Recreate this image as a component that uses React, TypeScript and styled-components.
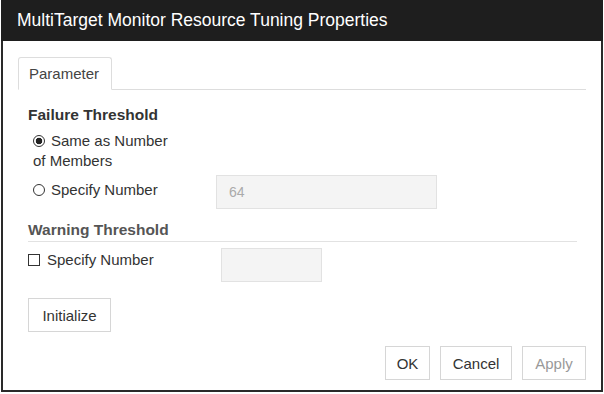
import { createGlobalStyle } from "styled-components"
import styled from "styled-components"

const GlobalStyle = createGlobalStyle`
    html, body {
        margin: 0;
        padding: 0;
        background: #ffffff;
    }
    body {
        font-family: "Liberation Sans", Arial, sans-serif;
        color: #333333;
    }
`

export default function App() {
    return (
        <>
            <GlobalStyle />
            <Window>
                <TitleBar>MultiTarget Monitor Resource Tuning Properties</TitleBar>
                <Body>
                    <TabBar>
                        <Tab>Parameter</Tab>
                    </TabBar>
                    <Panel>
                        <SectionTitle>Failure Threshold</SectionTitle>
                        <Options>
                            <WrapLabel>
                                <Radio $checked />
                                Same as Number of Members
                            </WrapLabel>
                            <Row $top={4}>
                                <OptionLabel $width={183} $offset={5}>
                                    <Radio />
                                    Specify Number
                                </OptionLabel>
                                <TextField $width={221} $disabled>64</TextField>
                            </Row>
                        </Options>

                        <SectionTitle $muted $ruled>Warning Threshold</SectionTitle>
                        <Row $top={6}>
                            <OptionLabel $width={193} $offset={2}>
                                <Checkbox />
                                Specify Number
                            </OptionLabel>
                            <TextField $width={101} $disabled />
                        </Row>

                        <ButtonRow $top={16}>
                            <Button $width={83}>Initialize</Button>
                        </ButtonRow>
                    </Panel>
                    <Footer>
                        <Button $width={45}>OK</Button>
                        <Button $width={72}>Cancel</Button>
                        <Button $width={64} $disabled>Apply</Button>
                    </Footer>
                </Body>
            </Window>
        </>
    )
}

const Window = styled.div`
    box-sizing: border-box;
    margin-left: 1px;
    width: 602px;
    height: 392px;
    border: 2px solid #2a2a2a;
    border-top: none;
    background: #ffffff;
    display: flex;
    flex-direction: column;
`

const TitleBar = styled.div`
    height: 41px;
    margin: 0 -2px;
    padding-left: 16px;
    background: #1e1e1e;
    color: #ffffff;
    font-size: 17.5px;
    line-height: 41px;
    white-space: nowrap;
`

const Body = styled.div`
    flex: 1;
    padding: 16px 15px 0 15px;
    display: flex;
    flex-direction: column;
`

const TabBar = styled.div`
    display: flex;
    border-bottom: 1px solid #dddddd;
`

const Tab = styled.div`
    box-sizing: border-box;
    width: 94px;
    height: 33px;
    margin-bottom: -1px;
    padding-left: 10px;
    border: 1px solid #dddddd;
    border-bottom-color: #ffffff;
    border-radius: 3px 3px 0 0;
    background: #ffffff;
    color: #444444;
    font-size: 15px;
    line-height: 31px;
`

const Panel = styled.div`
    padding: 15px 0 0 10px;
    display: flex;
    flex-direction: column;
`

const SectionTitle = styled.div<{ $muted?: boolean; $ruled?: boolean }>`
    font-size: 15.5px;
    font-weight: 700;
    line-height: 20px;
    color: ${(p) => (p.$muted ? "#555555" : "#333333")};
    ${(p) =>
        p.$ruled &&
        `
        margin-top: 11px;
        margin-right: 9px;
        padding-bottom: 1px;
        border-bottom: 1px solid #e2e2e2;
    `}
`

const Options = styled.div`
    padding-left: 5px;
    margin-top: 6px;
    display: flex;
    flex-direction: column;
`

const WrapLabel = styled.div`
    width: 150px;
    font-size: 15px;
    line-height: 20px;
`

const Row = styled.div<{ $top: number }>`
    display: flex;
    align-items: flex-start;
    margin-top: ${(p) => p.$top}px;
`

const OptionLabel = styled.div<{ $width: number; $offset: number }>`
    width: ${(p) => p.$width}px;
    padding-top: ${(p) => p.$offset}px;
    display: flex;
    align-items: center;
    font-size: 15px;
    line-height: 20px;
`

const Radio = styled.span<{ $checked?: boolean }>`
    box-sizing: border-box;
    display: inline-block;
    vertical-align: -1px;
    width: 12px;
    height: 12px;
    margin-right: 6px;
    border: 1px solid #333333;
    border-radius: 50%;
    background: ${(p) =>
        p.$checked ? "radial-gradient(circle, #222222 0 3px, #ffffff 3.6px)" : "#ffffff"};
`

const Checkbox = styled.span`
    box-sizing: border-box;
    display: inline-block;
    width: 12px;
    height: 12px;
    margin-right: 7px;
    border: 1px solid #333333;
`

const TextField = styled.div<{ $width: number; $disabled?: boolean }>`
    box-sizing: border-box;
    width: ${(p) => p.$width}px;
    height: 34px;
    padding-left: 12px;
    border: 1px solid #e2e2e2;
    background: ${(p) => (p.$disabled ? "#f4f4f4" : "#ffffff")};
    color: #aaaaaa;
    font-size: 14px;
    line-height: 32px;
`

const ButtonRow = styled.div<{ $top: number }>`
    display: flex;
    margin-top: ${(p) => p.$top}px;
`

const Button = styled.button<{ $width: number; $disabled?: boolean }>`
    box-sizing: border-box;
    width: ${(p) => p.$width}px;
    height: 34px;
    padding: 0;
    border: 1px solid #d6d6d6;
    background: #ffffff;
    color: ${(p) => (p.$disabled ? "#999999" : "#333333")};
    font-family: "Liberation Sans", Arial, sans-serif;
    font-size: 15px;
    cursor: pointer;
`

const Footer = styled.div`
    display: flex;
    justify-content: flex-end;
    gap: 10px;
    margin-top: 14px;
`
